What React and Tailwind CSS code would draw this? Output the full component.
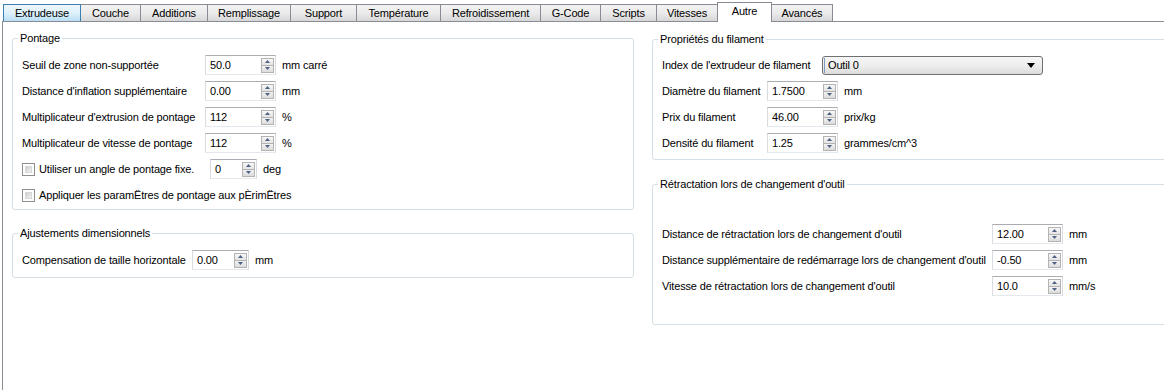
import React from "react";

const tabs = [
  { label: "Extrudeuse", w: "w-[78px]", state: "hover" },
  { label: "Couche", w: "w-[61px]" },
  { label: "Additions", w: "w-[68px]" },
  { label: "Remplissage", w: "w-[84px]" },
  { label: "Support", w: "w-[67px]" },
  { label: "Température", w: "w-[85px]" },
  { label: "Refroidissement", w: "w-[101px]" },
  { label: "G-Code", w: "w-[61px]" },
  { label: "Scripts", w: "w-[57px]" },
  { label: "Vitesses", w: "w-[62px]" },
  { label: "Autre", w: "w-[55px]", state: "selected" },
  { label: "Avancés", w: "w-[62px]" },
];

function Tab({ label, w, state, first }) {
  const base = `${w} ${first ? "" : "-ml-px"} flex items-center justify-center border-l border-r border-t whitespace-nowrap`;
  if (state === "selected") {
    return (
      <div className={`${base} relative z-10 h-[20px] -mb-px bg-white border-[#898c95] pb-[2px]`}>
        {label}
      </div>
    );
  }
  if (state === "hover") {
    return (
      <div className={`${base} relative z-[5] h-[17px] bg-linear-to-b from-[#eef7fd] via-[#dff1fb] to-[#b9def4] border-[#3c7fb1]`}>
        {label}
      </div>
    );
  }
  return (
    <div className={`${base} h-[17px] bg-linear-to-b from-[#f2f2f2] via-[#ebebeb] to-[#d6d6d6] border-[#898c95]`}>
      {label}
    </div>
  );
}

function Arrow({ up }) {
  return (
    <svg width="5" height="3" viewBox="0 0 5 3">
      {up ? <polygon points="2.5,0 5,3 0,3" fill="#4d6185" /> : <polygon points="0,0 5,0 2.5,3" fill="#4d6185" />}
    </svg>
  );
}

function Spin({ w, value }) {
  return (
    <div className={`${w} h-[20px] flex items-center border border-[#abadb3] border-l-[#d9dbe1] border-r-[#d9dbe1] border-b-[#e3e9ef] bg-white pl-[4px] pr-[1px]`}>
      <span className="flex-1 text-black">{value}</span>
      <div className="flex flex-col">
        <div className="w-[13px] h-[8px] border border-[#b3b3b3] bg-linear-to-b from-[#f7f7f7] to-[#e4e4e4] flex items-center justify-center">
          <Arrow up />
        </div>
        <div className="w-[13px] h-[8px] -mt-px border border-[#b3b3b3] bg-linear-to-b from-[#f2f2f2] to-[#dcdcdc] flex items-center justify-center">
          <Arrow />
        </div>
      </div>
    </div>
  );
}

function Row({ labelW, label, spinW, value, unit, unitGap = "ml-[6px]" }) {
  return (
    <div className="h-[20px] flex items-center">
      <div className={`${labelW} whitespace-nowrap`}>{label}</div>
      <Spin w={spinW} value={value} />
      <div className={`${unitGap} whitespace-nowrap`}>{unit}</div>
    </div>
  );
}

function Check() {
  return (
    <div className="w-[13px] h-[13px] border border-[#8e8f8f] bg-white p-[2px] shrink-0">
      <div className="w-full h-full bg-linear-to-br from-[#cbcbcb] to-[#f6f6f6] border border-[#d8d8d8]" />
    </div>
  );
}

function Group({ title, className, children }) {
  return (
    <fieldset className={`border border-[#d5dfe5] rounded-[3px] ${className}`}>
      <legend className="ml-[5px] px-[2px] leading-[13px]">{title}</legend>
      {children}
    </fieldset>
  );
}

export default function App() {
  return (
    <div
      className="w-[1164px] h-[390px] bg-white overflow-hidden text-[11px] tracking-[-0.15px] text-black"
      style={{ fontFamily: '"Liberation Sans", Arial, sans-serif' }}
    >
      <div className="h-[21px] flex items-end pl-[3px] relative z-10">
        {tabs.map((t, i) => (
          <Tab key={t.label} {...t} first={i === 0} />
        ))}
      </div>
      <div className="ml-[2px] h-[369px] border-l border-t border-[#898c95] flex pl-[9px] gap-[18px]">
        {/* left column */}
        <div className="w-[622px] shrink-0 flex flex-col pt-[10px]">
          <Group title="Pontage" className="">
            <div className="pl-[9px] pt-[10px] pb-[4px] flex flex-col gap-[6px]">
              <Row labelW="w-[183px]" label="Seuil de zone non-supportée" spinW="w-[71px]" value="50.0" unit="mm carré" />
              <Row labelW="w-[183px]" label="Distance d'inflation supplémentaire" spinW="w-[71px]" value="0.00" unit="mm" />
              <Row labelW="w-[183px]" label="Multiplicateur d'extrusion de pontage" spinW="w-[71px]" value="112" unit="%" />
              <Row labelW="w-[183px]" label="Multiplicateur de vitesse de pontage" spinW="w-[71px]" value="112" unit="%" />
              <div className="h-[20px] flex items-center">
                <div className="w-[188px] flex items-center gap-[4px] whitespace-nowrap">
                  <Check />
                  <span>Utiliser un angle de pontage fixe.</span>
                </div>
                <Spin w="w-[47px]" value="0" />
                <div className="ml-[6px]">deg</div>
              </div>
              <div className="h-[20px] flex items-center gap-[4px] whitespace-nowrap">
                <Check />
                <span>Appliquer les paramËtres de pontage aux pÈrimËtres</span>
              </div>
            </div>
          </Group>
          <Group title="Ajustements dimensionnels" className="mt-[17px]">
            <div className="pl-[9px] pt-[10px] pb-[7px]">
              <Row labelW="w-[170px]" label="Compensation de taille horizontale" spinW="w-[57px]" value="0.00" unit="mm" />
            </div>
          </Group>
        </div>
        {/* right column */}
        <div className="w-[540px] shrink-0 flex flex-col pt-[11px]">
          <Group title="Propriétés du filament">
            <div className="pl-[9px] pt-[9px] pb-[6px] flex flex-col gap-[6px]">
              <div className="h-[20px] flex items-center">
                <div className="w-[160px] whitespace-nowrap">Index de l'extrudeur de filament</div>
                <div className="w-[221px] h-[19px] border border-[#707070] rounded-[3px] bg-linear-to-b from-[#f6f6f6] via-[#eeeeee] to-[#dcdcdc] flex items-center pl-[1px] pr-[7px]">
                  <span className="flex-1 h-[15px] leading-[15px] pl-[3px] border-l border-[#7a9cc0]">Outil 0</span>
                  <svg width="8" height="5" viewBox="0 0 8 5" className="ml-[6px]">
                    <polygon points="0,0 8,0 4,5" fill="#000" />
                  </svg>
                </div>
              </div>
              <Row labelW="w-[105px]" label="Diamètre du filament" spinW="w-[71px]" value="1.7500" unit="mm" />
              <Row labelW="w-[105px]" label="Prix du filament" spinW="w-[71px]" value="46.00" unit="prix/kg" />
              <Row labelW="w-[105px]" label="Densité du filament" spinW="w-[71px]" value="1.25" unit="grammes/cm^3" />
            </div>
          </Group>
          <Group title="Rétractation lors de changement d'outil" className="mt-[18px]">
            <div className="pl-[9px] pt-[33px] pb-[28px] flex flex-col gap-[6px]">
              <Row labelW="w-[330px]" label="Distance de rétractation lors de changement d'outil" spinW="w-[71px]" value="12.00" unit="mm" />
              <Row labelW="w-[330px]" label="Distance supplémentaire de redémarrage lors de changement d'outil" spinW="w-[71px]" value="-0.50" unit="mm" />
              <Row labelW="w-[330px]" label="Vitesse de rétractation lors de changement d'outil" spinW="w-[71px]" value="10.0" unit="mm/s" />
            </div>
          </Group>
        </div>
      </div>
    </div>
  );
}
